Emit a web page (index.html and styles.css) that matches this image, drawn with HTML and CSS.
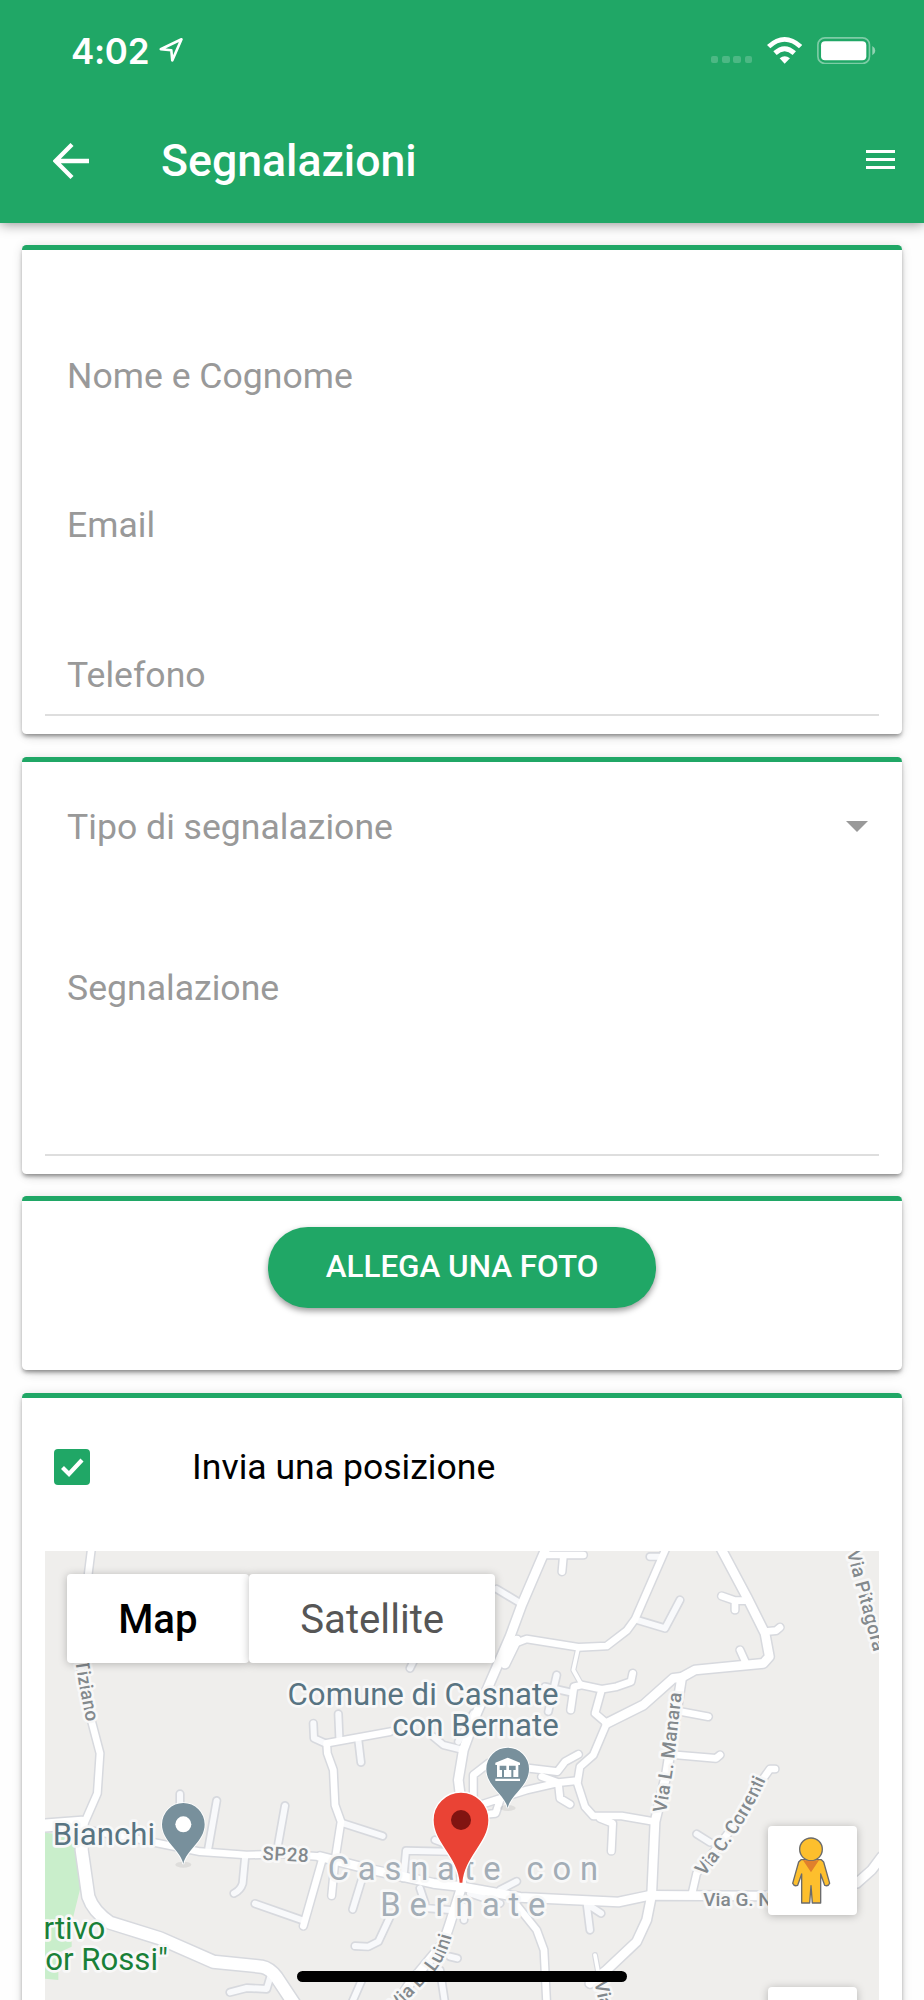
FILE: index.html
```html
<!DOCTYPE html>
<html lang="it">
  <head>
    <meta charset="UTF-8" />
    <meta name="viewport" content="width=device-width, initial-scale=1.0" />
    <title>Segnalazioni</title>
    <link rel="stylesheet" href="styles.css">
  </head>
  <body>
    <header class="header">
      <div class="status-bar">
        <span class="time">4:02</span>
        <svg class="location" viewBox="0 0 26 26">
          <path d="M1.8 12.2 23.4 1.8 13.8 23.8 12.8 13.2Z" fill="none" stroke="#fff" stroke-width="2.7" stroke-linejoin="round" />
        </svg>
        <div class="signal"><i></i><i></i><i></i><i></i></div>
        <svg class="wifi" viewBox="0 0 106 80">
          <path d="M0 24Q53-24 106 24L96 34Q53-5 10 34Z" fill="#fff" />
          <path d="M19 43Q53 12 87 43L77 54Q53 32 29 54Z" fill="#fff" />
          <path d="M38 64Q53 51 69 64L53 80Z" fill="#fff" />
        </svg>
        <svg class="battery" viewBox="0 0 176 82">
          <rect x="2.5" y="2.5" width="155" height="77" rx="21" fill="none" stroke="#fff" stroke-opacity=".42" stroke-width="5" />
          <rect x="12" y="13" width="136" height="57" rx="12" fill="#fff" />
          <path d="M166 27Q175 32 175 41T166 55Z" fill="#fff" fill-opacity=".5" />
        </svg>
      </div>
      <div class="toolbar">
        <svg class="back" viewBox="0 0 36 36">
          <path d="M19 1.5 2.5 18 19 34.5M2.5 18H36" fill="none" stroke="#fff" stroke-width="4.3" />
        </svg>
        <h1>Segnalazioni</h1>
        <div class="menu"><i></i><i></i><i></i></div>
      </div>
    </header>

    <main class="content">
      <section class="card card-contact">
        <div class="field">Nome e Cognome</div>
        <div class="field">Email</div>
        <div class="field field-line">Telefono</div>
      </section>

      <section class="card card-report">
        <div class="select">
          <span>Tipo di segnalazione</span>
          <span class="select-arrow"></span>
        </div>
        <div class="textarea">Segnalazione</div>
      </section>

      <section class="card card-photo">
        <button class="btn">ALLEGA UNA FOTO</button>
      </section>

      <section class="card card-position">
        <div class="check-row">
          <svg class="checkbox" viewBox="0 0 36 36">
            <rect width="36" height="36" rx="4" fill="#20a766" />
            <path d="M8.5 18.5 15 25 28 11" fill="none" stroke="#fff" stroke-width="4.2" />
          </svg>
          <span>Invia una posizione</span>
        </div>

        <div class="map">
          <svg class="map-canvas" viewBox="135 33 2502 1347">
            <defs>
              <g id="minor">
                <path d="M540 762V810M650 782 625 925M855 797 835 910M735 955 728 1030Q722 1050 702 1060M690 1357 740 1344 800 1347 814 1300M765 1091 905 1140" />
                <path d="M1490 147 1565 192M940 550 942 595 980 612M1015 522 1018 592M1075 600 1083 667M1030 850 1148 888M1240 365 1230 385" />
                <path d="M1300 590 1330 615 1390 630M1420 520 1375 605M1210 1015 1218 932 1350 935M1305 900 1345 915M1085 1020 1058 1108M1170 1130 1135 1205 1105 1220 1065 1218" />
                <path d="M1260 1045 1275 1090M1285 1105 1350 1110M1392 1140V1100M1500 1050 1550 1024M1410 1060 1500 1090M1350 1250 1372 1255M1320 1290 1335 1390M1090 1310 1055 1390" />
                <path d="M1760 1090 1770 1170M1770 1098 1803 1120M1800 1310 1880 1235M1670 405 1645 515M1635 440 1715 458" />
                <path d="M1950 50H1980M1905 238 1995 265 2040 180M2090 882 2130 907" />
              </g>
              <g id="thin">
                <path d="M1735 322 1720 390 1745 435M1785 1245 1797 1310" />
              </g>
              <g id="street">
                <path d="M275 20 265 100 240 370 255 480 275 545 300 640 292 760 255 845" />
                <path d="M260 870 400 895 600 935 740 945 850 942 960 950" />
                <path d="M965 965 910 1158" />
                <path d="M1170 575 980 610 982 640 1000 690 1005 795 1023 845 1005 960 995 1067" />
                <path d="M1630 45H1750M1690 50 1686 95" />
                <path d="M1545 310 1580 297 1735 322 1820 318 1880 272 1905 238 2000 20" />
                <path d="M1745 435 1722 440 1712 510M1745 435 1805 448 1850 440 1893 425 1898 400M1805 448 1785 520 1820 550" />
                <path d="M1820 550 1780 645 1740 680 1732 730 1755 800 1780 828H1865L1965 845M1800 835 1838 850 1834 933" />
                <path d="M1735 643 1695 665 1672 695 1590 685M1625 710 1675 728 1732 722M1675 728 1580 750 1440 795M1675 728 1680 775 1710 793M1500 780 1487 820 1440 825M1465 670 1420 705V780" />
                <path d="M2165 168 2205 182H2240M2205 182V210M2295 275 2328 272 2340 262M2220 330 2238 370M2045 515 2125 530M2030 645 2148 655 2160 645" />
                <path d="M2075 1065 2090 1000 2200 860 2290 715 2310 687H2325" />
                <path d="M1550 1095 1610 1170 1632 1230 1640 1390" />
              </g>
              <g id="avenue">
                <path d="M960 950 1110 988 1300 1030 1385 1040 1560 1072 1855 1086 1950 1066 2300 1068 2570 1030 2615 990 2645 950" />
                <path d="M1640 20 1565 195 1530 290 1430 520 1390 630 1375 720 1385 800V1040L1350 1150 1330 1210 1230 1330 1190 1390" />
                <path d="M1550 300 1515 372" />
                <path d="M1820 550 1930 495 2020 415 2045 412 2085 390 2290 370 2308 350 2295 280 2240 170 2160 20" />
                <path d="M2045 412 2000 700 1965 845 1955 1065 1940 1140 1910 1205 1820 1290 1770 1330" />
              </g>
              <g id="highway">
                <path d="M120 858 245 848 245 930 265 1070Q280 1115 330 1148L480 1195 640 1265 785 1280Q810 1285 830 1312L885 1395" />
              </g>
            </defs>
            <rect x="135" y="33" width="2502" height="1347" fill="#efeeec" />
            <path d="M135 878 205 885 235 940 242 1040 215 1150V1220L175 1238V1320L135 1316Z" fill="#c9eecb" />
            <g class="casing">
              <use href="#minor" stroke-width="28" />
              <use href="#thin" stroke-width="18" />
              <use href="#street" stroke-width="29" />
              <use href="#avenue" stroke-width="35" />
              <use href="#highway" stroke-width="45" />
            </g>
            <g class="paving">
              <use href="#minor" stroke-width="18" stroke="#f8f9fb" />
              <use href="#thin" stroke-width="11" />
              <use href="#street" stroke-width="20" />
              <use href="#avenue" stroke-width="26" />
              <use href="#highway" stroke-width="36" />
            </g>

            <g class="street-label">
              <path id="tiziano" d="M226 362 238 440 258 540" />
              <path id="manara" d="M1998 820 2020 680 2047 440" />
              <path id="correnti" d="M2112 1010Q2245 850 2310 690" />
              <path id="pitagora" d="M2540 36 2575 165 2630 370" />
              <path id="luini" d="M1190 1415 1290 1310Q1342 1260 1362 1160" />
              <text><textPath href="#tiziano">Tiziano</textPath></text>
              <text><textPath href="#manara" textLength="364">Via L. Manara</textPath></text>
              <text><textPath href="#correnti" textLength="346">Via C. Correnti</textPath></text>
              <text><textPath href="#pitagora">Via Pitagora</textPath></text>
              <text><textPath href="#luini">Via B. Luini</textPath></text>
              <text x="2110" y="1097">Via G. N</text>
              <text transform="translate(1783 1326) rotate(78)">Via</text>
              <text transform="translate(787 959) rotate(3)" textLength="138">SP28</text>
            </g>
            <g class="town-label">
              <text x="983" y="1021" textLength="811">Casnate con</text>
              <text x="1141" y="1129" textLength="495">Bernate</text>
            </g>
            <g class="place-label">
              <text x="1676" y="494" text-anchor="end">Comune di Casnate</text>
              <text x="1676" y="588" text-anchor="end">con Bernate</text>
              <text x="465" y="916" text-anchor="end">Bianchi</text>
            </g>
            <g class="park-label">
              <text x="316" y="1197" text-anchor="end">rtivo</text>
              <text x="504" y="1291" text-anchor="end">or Rossi"</text>
            </g>

            <ellipse cx="550" cy="974" rx="24" ry="9" fill="#000" opacity=".07" />
            <path class="pin" d="M550 972C542 930 486 905 486 853A64 64 0 0 1 614 853C614 905 558 930 550 972Z" />
            <circle cx="550" cy="853" r="24" fill="#fff" />
            <ellipse cx="1523" cy="804" rx="24" ry="9" fill="#000" opacity=".07" />
            <path class="pin" d="M1523 804C1515 764 1459 739 1459 687A64 64 0 0 1 1587 687C1587 739 1531 764 1523 804Z" />
            <path d="M1486 668 1523 653 1560 668V675H1555V711H1491V675H1486ZM1486 716H1560V723H1486Z" fill="#fff" />
            <path d="M1499 677H1519V690H1512V711H1506V690H1499ZM1527 677H1547V690H1540V711H1534V690H1527Z" fill="#78909c" />
            <path d="M1377 1030C1372 950 1299 910 1299 840A84 84 0 0 1 1467 840C1467 910 1394 950 1389 1030Z" fill="#ea4335" stroke="#fff" stroke-width="4" />
            <circle cx="1383" cy="840" r="30" fill="#811411" />
          </svg>

          <div class="map-type">
            <span class="active">Map</span>
            <span>Satellite</span>
          </div>
          <div class="map-controls">
            <div class="control">
              <svg viewBox="504 858 267 267">
                <g fill="#fdbf2d" stroke="#6b6b6b" stroke-width="4" stroke-linejoin="round">
                  <path d="M603 959H664L671 966 689 1030Q685 1040 674 1036L662 1002V1089H637L633 1037 629 1089H605V1002L593 1036Q582 1040 578 1030L596 966Z" />
                  <circle cx="633" cy="928" r="34" />
                </g>
                <path d="M608 959Q633 966 658 959L633 997Z" fill="#e0802c" />
              </svg>
            </div>
            <div class="control"></div>
          </div>
        </div>
      </section>
    </main>
    <div class="home-indicator"></div>
  </body>
</html>
```
FILE: styles.css
```css
* {
  box-sizing: border-box;
}

body {
  height: 2000px;
  margin: 0;
  overflow: hidden;
  font-family: Roboto, "Liberation Sans", sans-serif;
  font-size: 35.6px;
  line-height: 50px;
  color: #000;
  background: #fefefe;
}

svg {
  display: block;
  flex: none;
}

.header {
  height: 223px;
  color: white;
  background: #20a766;
  box-shadow: 0 1px 12px rgba(0, 0, 0, 0.45);
}

.status-bar {
  display: flex;
  align-items: center;
  height: 101px;
  padding: 0 48px 0 71px;
}

.time {
  width: 88px;
  font-family: Inter, sans-serif;
  font-size: 35px;
  font-weight: 600;
  letter-spacing: -0.3px;
}

.location {
  width: 25px;
  height: 26px;
  margin-top: -2px;
}

.signal {
  display: flex;
  gap: 3.7px;
  margin: 18px 15px 0 auto;
}

.signal i {
  width: 7.5px;
  height: 7.5px;
  border-radius: 2px;
  background: rgba(255, 255, 255, 0.2);
}

.wifi {
  width: 35.3px;
  height: 26.7px;
  margin-right: 15px;
}

.battery {
  width: 58.7px;
  height: 27.3px;
}

.toolbar {
  display: flex;
  align-items: center;
  height: 120px;
  padding: 0 29px 0 53px;
}

.back {
  width: 36px;
  height: 36px;
}

.toolbar h1 {
  margin: 0 auto 0 72px;
  font-size: 44.6px;
  font-weight: 500;
}

.menu {
  display: flex;
  flex-direction: column;
  gap: 4.5px;
  margin-top: -3px;
}

.menu i {
  width: 29px;
  height: 3.4px;
  background: white;
}

.content {
  display: flex;
  flex-direction: column;
  gap: 22.3px;
  padding: 22.4px 22.3px 0;
}

.card {
  padding: 0 22.3px;
  border-top: 5px solid #20a766;
  border-radius: 4.5px;
  background: white;
  box-shadow: 0 7px 12px -5px rgba(0, 0, 0, 0.1), 0 1px 11px rgba(0, 0, 0, 0.12), 0 3px 4px -1px rgba(0, 0, 0, 0.4);
}

.card-contact {
  height: 489px;
  padding-top: 17.6px;
  color: #999;
}

.field {
  height: 149.5px;
  padding: 83px 22.5px 0;
}

.field-line {
  border-bottom: 2px solid #dedede;
}

.card-report {
  height: 417px;
  color: #999;
}

.select {
  display: flex;
  align-items: center;
  justify-content: space-between;
  height: 131px;
  padding: 0 11px 0 22.5px;
}

.select-arrow {
  margin-bottom: 1px;
  border: 11px solid transparent;
  border-top-color: #999;
  border-bottom: 0;
}

.textarea {
  height: 263.5px;
  padding: 70.5px 22.5px 0;
  border-bottom: 2px solid #dedede;
}

.card-photo {
  height: 174.5px;
  padding-top: 26.5px;
  text-align: center;
}

.btn {
  width: 388px;
  height: 80.5px;
  padding: 0 0 3px;
  border: none;
  border-radius: 40px;
  font-family: inherit;
  font-size: 31.4px;
  font-weight: 500;
  color: white;
  background: #20a766;
  box-shadow: 0 3px 6px rgba(0, 0, 0, 0.4);
}

.card-position {
  height: 640px;
}

.check-row {
  display: flex;
  align-items: center;
  gap: 102.5px;
  height: 153.5px;
  padding: 0 9px 16px;
}

.checkbox {
  width: 36px;
  height: 36px;
}

.map {
  position: relative;
  width: 834px;
  height: 449px;
}

.map-canvas {
  width: 834px;
  height: 449px;
}

.casing,
.paving {
  fill: none;
  stroke-linecap: round;
  stroke-linejoin: round;
}

.casing {
  stroke: #d7d9de;
}

.paving {
  stroke: white;
}

.map-canvas text {
  paint-order: stroke;
  stroke: #f8f8f8;
  stroke-width: 16px;
  stroke-linejoin: round;
}

.street-label {
  font-size: 57px;
  font-weight: 500;
  fill: #83898d;
}

.street-label path {
  fill: none;
}

.town-label {
  font-size: 98px;
  fill: #a3adb6;
}

.place-label {
  font-size: 93.5px;
  fill: #587482;
}

.park-label {
  font-size: 93.5px;
  fill: #188038;
}

.pin {
  fill: #78909c;
  stroke: white;
  stroke-width: 5px;
  paint-order: stroke;
}

/* Controls floating over the map */
.map-type {
  position: absolute;
  top: 22.3px;
  left: 22.3px;
  display: flex;
  font-size: 40.2px;
  color: #565656;
}

.map-type span {
  height: 89.5px;
  padding: 0 51.3px;
  border-radius: 4px;
  line-height: 91px;
  background: white;
  box-shadow: 0 1px 8px rgba(0, 0, 0, 0.25);
}

.map-type .active {
  font-weight: 500;
  color: #000;
}

.map-controls {
  position: absolute;
  top: 275px;
  right: 22px;
  display: flex;
  flex-direction: column;
  gap: 71.5px;
}

.control {
  width: 89px;
  height: 89px;
  border-radius: 4px;
  background: white;
  box-shadow: 0 1px 8px rgba(0, 0, 0, 0.25);
}

.home-indicator {
  position: fixed;
  bottom: 18px;
  left: 297px;
  width: 330px;
  height: 11px;
  border-radius: 6px;
  background: #000;
}
```
